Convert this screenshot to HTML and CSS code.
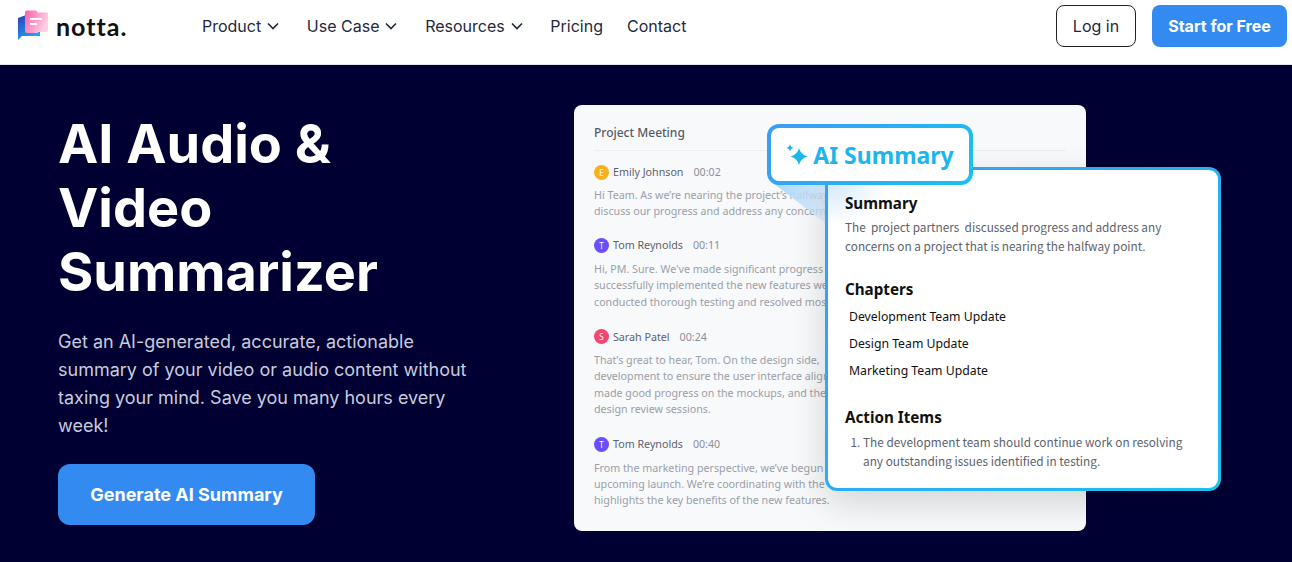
FILE: index.html
```html
<!doctype html>
<html lang="en">
    <head>
        <meta charset="UTF-8" />
        <meta name="viewport" content="width=device-width, initial-scale=1.0" />
        <title>Notta - AI Audio &amp; Video Summarizer</title>
        <link rel="stylesheet" href="styles.css">
    </head>

    <body>
        <header class="topbar">
            <a class="logo" href="#">
                <svg class="logo-mark" width="32" height="32" viewBox="0 0 32 32">
                    <defs>
                        <linearGradient id="logoBlue" x1="0" y1="0" x2="0.6" y2="1">
                            <stop offset="0" stop-color="#2b3fb8" />
                            <stop offset="1" stop-color="#1fa8f5" />
                        </linearGradient>
                        <linearGradient id="logoPink" x1="0" y1="0" x2="1" y2="0.4">
                            <stop offset="0" stop-color="#ff5fa8" />
                            <stop offset="1" stop-color="#ffd0e4" />
                        </linearGradient>
                    </defs>
                    <path d="M1 8 L9 5 L23 5 L23 26 L5 26 L1 30 Z" fill="url(#logoBlue)" />
                    <path d="M8 2 Q8 0.5 10 0.5 L19 0.5 L21 2.5 L30 2.5 Q31 2.5 31 4 L31 20 Q31 22 29 22 L21 22 L21 23 L10 23 Q8 23 8 21 Z" fill="url(#logoPink)" />
                    <rect x="13" y="8" width="12" height="2" fill="#fff" />
                    <rect x="13" y="13" width="7" height="2" fill="#fff" />
                </svg>
                <span class="logo-text">notta.</span>
            </a>
            <nav class="nav">
                <a href="#">Product <svg class="chev" width="12" height="8" viewBox="0 0 12 8"><path d="M1 1.5 L6 6.5 L11 1.5" /></svg></a>
                <a href="#">Use Case <svg class="chev" width="12" height="8" viewBox="0 0 12 8"><path d="M1 1.5 L6 6.5 L11 1.5" /></svg></a>
                <a href="#">Resources <svg class="chev" width="12" height="8" viewBox="0 0 12 8"><path d="M1 1.5 L6 6.5 L11 1.5" /></svg></a>
                <a href="#">Pricing</a>
                <a href="#">Contact</a>
            </nav>
            <div class="actions">
                <a class="btn-login" href="#">Log in</a>
                <a class="btn-start" href="#">Start for Free</a>
            </div>
        </header>

        <main class="hero">
            <section class="hero-copy">
                <h1>AI Audio &amp; Video Summarizer</h1>
                <p>Get an AI-generated, accurate, actionable summary of your video or audio content without taxing your mind. Save you many hours every week!</p>
                <a class="btn-generate" href="#">Generate AI Summary</a>
            </section>

            <section class="shot">
                <div class="meeting">
                    <h2>Project Meeting</h2>

                    <div class="speaker first">
                        <span class="avatar orange">E</span><span class="who">Emily Johnson</span><span class="time">00:02</span>
                    </div>
                    <div class="said">
                        <span>Hi Team. As we’re nearing the project’s halfway</span>
                        <span>discuss our progress and address any concerns</span>
                    </div>

                    <div class="speaker">
                        <span class="avatar purple">T</span><span class="who">Tom Reynolds</span><span class="time">00:11</span>
                    </div>
                    <div class="said">
                        <span>Hi, PM. Sure. We've made significant progress</span>
                        <span>successfully implemented the new features we</span>
                        <span>conducted thorough testing and resolved most</span>
                    </div>

                    <div class="speaker">
                        <span class="avatar red">S</span><span class="who">Sarah Patel</span><span class="time">00:24</span>
                    </div>
                    <div class="said">
                        <span>That’s great to hear, Tom. On the design side,</span>
                        <span>development to ensure the user interface aligns</span>
                        <span>made good progress on the mockups, and the</span>
                        <span>design review sessions.</span>
                    </div>

                    <div class="speaker">
                        <span class="avatar purple">T</span><span class="who">Tom Reynolds</span><span class="time">00:40</span>
                    </div>
                    <div class="said">
                        <span>From the marketing perspective, we’ve begun</span>
                        <span>upcoming launch. We’re coordinating with the</span>
                        <span>highlights the key benefits of the new features.</span>
                    </div>
                </div>

                <div class="beam"></div>

                <div class="panel">
                    <h3>Summary</h3>
                    <p class="panel-text">The&nbsp; project partners&nbsp; discussed progress and address any<br />concerns on a project that is nearing the halfway point.</p>
                    <h3 class="chapters-title">Chapters</h3>
                    <ul class="chapters">
                        <li>Development Team Update</li>
                        <li>Design Team Update</li>
                        <li>Marketing Team Update</li>
                    </ul>
                    <h3 class="items-title">Action Items</h3>
                    <ol class="panel-text items">
                        <li>The development team should continue work on resolving any outstanding issues identified in testing.</li>
                    </ol>
                </div>

                <div class="label">
                    <svg width="22" height="22" viewBox="0 0 22 22">
                        <path d="M13 4 Q14.5 10.5 21.5 12.5 Q14.5 14.5 13 21 Q11.5 14.5 4.5 12.5 Q11.5 10.5 13 4 Z" fill="#1cb5ec" />
                        <path d="M4 0.5 Q4.6 3 7.5 3.8 Q4.6 4.6 4 7.2 Q3.4 4.6 0.5 3.8 Q3.4 3 4 0.5 Z" fill="#1cb5ec" />
                    </svg>
                    <span>AI Summary</span>
                </div>
            </section>
        </main>
    </body>
</html>
```

FILE: styles.css
```css
html,
body {
    margin: 0;
    height: 100%;
}

body {
    font-family: Inter, "Liberation Sans", sans-serif;
    background: #000033;
    overflow: hidden;
}

a {
    text-decoration: none;
    color: inherit;
}

.topbar {
    height: 65px;
    box-sizing: border-box;
    display: flex;
    align-items: flex-start;
    padding: 5px 5px 0 17px;
    background: white;
    border-bottom: 1px solid #e6e6ec;
    color: #1f2a3d;
}

.logo {
    width: 185px;
    height: 42px;
    display: flex;
    align-items: center;
    gap: 7px;
}

.logo-text {
    font-family: Lato, sans-serif;
    font-size: 25px;
    font-weight: 700;
    letter-spacing: 1px;
    color: #111;
}

.nav {
    display: flex;
    gap: 24px;
    height: 42px;
    font-size: 16px;
}

.nav a {
    display: flex;
    align-items: center;
    gap: 6px;
}

.chev {
    margin-right: 3.67px;
}

.chev path {
    fill: none;
    stroke: #1f2a3d;
    stroke-width: 1.6;
}

.actions {
    margin-left: auto;
    display: flex;
    gap: 16px;
}

.btn-login,
.btn-start {
    height: 42px;
    box-sizing: border-box;
    display: flex;
    align-items: center;
    justify-content: center;
    border-radius: 8px;
    font-size: 16px;
}

.btn-login {
    width: 80px;
    border: solid 1px #222;
}

.btn-start {
    width: 135px;
    background: #338bf1;
    color: white;
    font-weight: 700;
}

.hero {
    display: flex;
    padding-left: 58px;
    height: 497px;
}

.hero-copy {
    width: 420px;
    padding-top: 47px;
}

.hero-copy h1 {
    margin: 0;
    color: white;
    font-size: 54px;
    line-height: 64px;
    font-weight: 700;
    width: 340px;
}

.hero-copy p {
    margin: 24px 0 0;
    color: #c9cbdc;
    font-size: 18px;
    line-height: 28px;
}

.btn-generate {
    margin-top: 24px;
    width: 257px;
    height: 61px;
    display: flex;
    align-items: center;
    justify-content: center;
    border-radius: 12px;
    background: #338bf1;
    color: white;
    font-size: 18px;
    font-weight: 700;
}

/* product picture on the right, cards overlap each other */
.shot {
    font-family: "Noto Sans", sans-serif;
    position: relative;
    flex: 1;
}

.meeting {
    position: absolute;
    left: 96px;
    top: 40px;
    width: 512px;
    height: 426px;
    box-sizing: border-box;
    padding: 19px 20px;
    border-radius: 8px;
    background: #f8f9fb;
    overflow: hidden;
    color: #9a9ea8;
    font-size: 10.7px;
}

.meeting h2 {
    margin: 0;
    padding-bottom: 8px;
    border-bottom: 1px solid #eceef1;
    font-size: 12px;
    line-height: 18px;
    font-weight: 500;
    color: #555b66;
}

.speaker {
    display: flex;
    align-items: center;
    height: 16px;
    margin: 18.5px 0 7.5px;
    color: #5c626d;
}

.speaker.first {
    margin: 13px 0 7px;
}

.first + .said {
    margin-bottom: -1px;
}

.avatar {
    width: 15px;
    height: 15px;
    margin-right: 4px;
    border-radius: 50%;
    color: white;
    font-size: 8px;
    line-height: 15px;
    text-align: center;
}

.orange {
    background: #fbae1e;
}

.purple {
    background: #6c4dff;
}

.red {
    background: #f5456d;
}

.who {
    margin-right: 10px;
}

.time {
    color: #8a8f99;
}

.said span {
    display: block;
    line-height: 16.4px;
    white-space: nowrap;
}

.beam {
    position: absolute;
    left: 295px;
    top: 118px;
    width: 52px;
    height: 40px;
    background: linear-gradient(120deg, #a9d6fb, rgba(220, 238, 253, 0.7));
    clip-path: polygon(0 0, 100% 0, 100% 100%);
}

.panel {
    position: absolute;
    left: 347px;
    top: 102px;
    width: 396px;
    height: 324px;
    box-sizing: border-box;
    padding: 22px 17px 0;
    border: solid 3px transparent;
    border-radius: 12px;
    background:
        radial-gradient(60px 40px at 0 15px, #d3e9fd, transparent) padding-box,
        linear-gradient(white, white) padding-box,
        linear-gradient(135deg, #3d9bf5, #18c2f0) border-box;
    box-shadow: 0 12px 36px rgba(0, 0, 0, 0.15);
    color: #111;
}

.panel h3 {
    margin: 0;
    font-size: 15.2px;
    line-height: 22px;
    font-weight: 700;
}

.panel-text {
    margin: 3px 0 0;
    font-family: "Noto Sans CJK SC", "Noto Sans", sans-serif;
    font-size: 11.8px;
    line-height: 19px;
    color: #5c626d;
}

.panel .chapters-title {
    margin-top: 23px;
}

.chapters {
    list-style: none;
    margin: 3px 0 0;
    padding: 0 0 0 4px;
    font-size: 12.25px;
    line-height: 27px;
}

.panel .items-title {
    margin-top: 22px;
}

.items {
    margin-top: 4px;
    padding-left: 18px;
}

.label {
    position: absolute;
    left: 289px;
    top: 59px;
    width: 206px;
    height: 61px;
    box-sizing: border-box;
    display: flex;
    align-items: center;
    justify-content: center;
    gap: 5px;
    border: solid 4px transparent;
    border-radius: 12px;
    background:
        linear-gradient(white, white) padding-box,
        linear-gradient(135deg, #3d9bf5, #18c2f0) border-box;
    color: #1cb5ec;
    font-size: 23px;
    font-weight: 700;
}
```
